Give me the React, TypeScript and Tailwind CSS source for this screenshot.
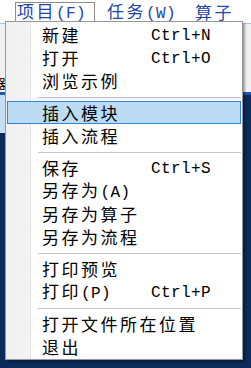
import React from 'react';

type Item = { label: string; shortcut?: string; active?: boolean };

const groups: Item[][] = [
  [{ label: '新建', shortcut: 'Ctrl+N' }, { label: '打开', shortcut: 'Ctrl+O' }, { label: '浏览示例' }],
  [{ label: '插入模块', active: true }, { label: '插入流程' }],
  [{ label: '保存', shortcut: 'Ctrl+S' }, { label: '另存为(A)' }, { label: '另存为算子' }, { label: '另存为流程' }],
  [{ label: '打印预览' }, { label: '打印(P)', shortcut: 'Ctrl+P' }],
  [{ label: '打开文件所在位置' }, { label: '退出' }],
];

// CJK and latin runs get different fonts so the widths line up like the old bitmap font
function Label({ text }: { text: string }) {
  const parts = text.split(/([\u4e00-\u9fff]+)/).filter(Boolean);
  return (
    <span className="whitespace-pre">
      {parts.map((p, i) =>
        /[\u4e00-\u9fff]/.test(p) ? (
          <span key={i} className="font-['Noto_Sans_CJK_SC',sans-serif] text-[17px] tracking-[2.5px]">{p}</span>
        ) : (
          <span key={i} className="font-['Liberation_Mono',monospace] text-[16px] tracking-[0.4px]">{p}</span>
        )
      )}
    </span>
  );
}

function MenuRow({ item }: { item: Item }) {
  return (
    <div
      className={`mx-[1px] h-[23px] flex items-center pl-[34px] border leading-none text-black ${
        item.active ? 'bg-[#bcdcf4] border-[#3385dc]' : 'border-transparent'
      }`}
    >
      <div className="w-[109px] shrink-0">
        <Label text={item.label} />
      </div>
      {item.shortcut && <Label text={item.shortcut} />}
    </div>
  );
}

export default function App() {
  return (
    <div className="w-[251px] h-[368px] relative overflow-hidden bg-[#0c2b5b]">
      {/* menu bar */}
      <div className="h-[23px] bg-white pt-[2px] pl-[15px] flex items-start text-[#1f45a8] leading-none">
        <div className="w-[80px] h-[19px] border-t border-l border-r border-[#8e8e8e] pl-[1px] flex items-center">
          <Label text="项目(F)" />
        </div>
        <div className="ml-[12px] h-[19px] flex items-center">
          <Label text="任务(W)" />
        </div>
        <div className="ml-[19px] h-[19px] flex items-center">
          <Label text="算子" />
        </div>
      </div>

      {/* app content behind the menu */}
      <div className="h-[1px] bg-[#9cc8ec]" />
      <div className="h-[68px] bg-[#f0f0f0] pt-[52px]">
        <div className="ml-[-7px] text-[13px] leading-[13px] text-black font-['Noto_Sans_CJK_SC',sans-serif]">器</div>
      </div>
      <div className="h-[3px] bg-[#1d56b0]" />
      <div className="w-[6px] h-[38px] bg-[#c4def4]" />

      {/* dropdown */}
      <div className="absolute left-[5px] top-[21px] w-[238px] border border-[#979797] pt-[1px] pb-[1px] shadow-[2px_2px_2px_rgba(0,0,0,0.35)] bg-[linear-gradient(to_right,#f0f0f0_0,#f3f3f3_24px,#e2e2e2_24px,#e2e2e2_25px,#ffffff_25px)]">
        {groups.map((g, gi) => (
          <div key={gi}>
            {gi > 0 && (
              <div className="h-[9px] pt-[5px]">
                <div className="ml-[32px] mr-[1px] h-[1px] bg-[#c5c5c5]" />
              </div>
            )}
            {g.map((item) => (
              <MenuRow key={item.label} item={item} />
            ))}
          </div>
        ))}
      </div>
    </div>
  );
}
